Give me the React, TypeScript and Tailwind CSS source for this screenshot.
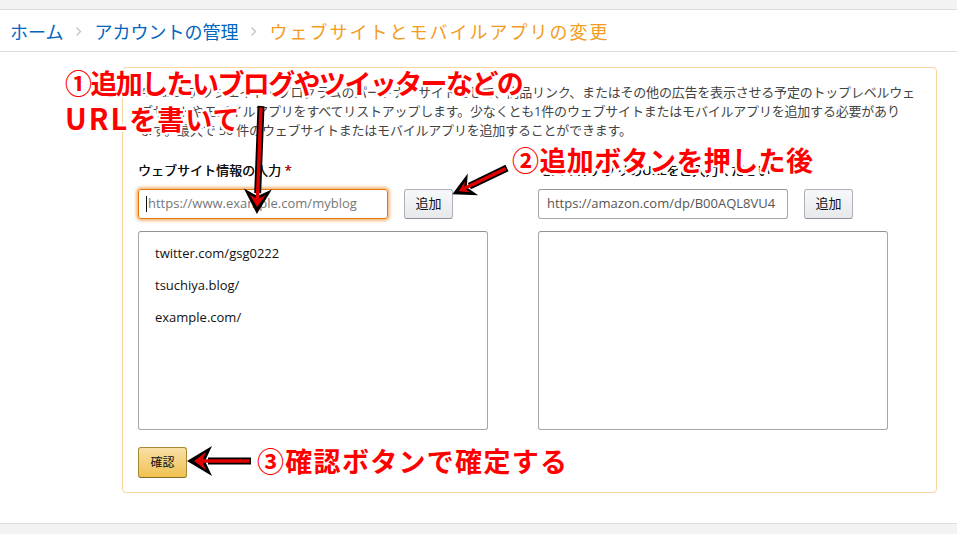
import React from "react";

type ArrowProps = { x1: number; y1: number; x2: number; y2: number; hw?: number; hl?: number };

function Arrow({ x1, y1, x2, y2, hw = 14, hl = 22 }: ArrowProps) {
  const dx = x2 - x1;
  const dy = y2 - y1;
  const L = Math.sqrt(dx * dx + dy * dy);
  const deg = (Math.atan2(dy, dx) * 180) / Math.PI;
  return (
    <g transform={`translate(${x2} ${y2}) rotate(${deg})`}>
      <line x1={-L} y1={0} x2={-hl + 4} y2={0} stroke="#000" strokeWidth={7} />
      <polygon points={`3,0 ${-hl},${-hw} ${-hl + 7},0 ${-hl},${hw}`} fill="#000" />
      <polygon points={`-4,0 ${-hl + 6},${-hw + 6} ${-hl + 10},0 ${-hl + 6},${hw - 6}`} fill="#e00000" />
      <line x1={-L + 1.5} y1={0} x2={-8} y2={0} stroke="#e00000" strokeWidth={3.5} />
    </g>
  );
}

function Chevron() {
  return (
    <svg width="7" height="11" viewBox="0 0 7 11" className="mx-[12px] mt-[2px]">
      <path d="M1.5 1.5 L5.5 5.5 L1.5 9.5" fill="none" stroke="#c4c4c4" strokeWidth="1.4" />
    </svg>
  );
}

const outline =
  "[text-shadow:2px_0_#fff,-2px_0_#fff,0_2px_#fff,0_-2px_#fff,2px_2px_#fff,-2px_-2px_#fff,2px_-2px_#fff,-2px_2px_#fff]";

export default function App() {
  return (
    <div className="relative w-[957px] h-[534px] overflow-hidden bg-white flex flex-col font-['Open_Sans','Noto_Sans_CJK_JP',sans-serif]">
      <div className="h-[10px] bg-[#f3f3f3] border-b border-[#dddddd] shrink-0" />
      <div className="h-[42px] shrink-0 flex items-center pl-[10px] border-b border-[#dddddd] text-[18px] leading-none font-['Noto_Sans_CJK_JP',sans-serif]">
        <span className="text-[#0066c0]">ホーム</span>
        <Chevron />
        <span className="text-[#0066c0]">アカウントの管理</span>
        <Chevron />
        <span className="text-[#f39c1f] tracking-[2px]">ウェブサイトとモバイルアプリの変更</span>
      </div>

      <div className="flex-1 pt-[15px] pl-[122px] pr-[20px]">
        <div className="border border-[#f7d59c] rounded-[4px] px-[15px] pt-[15px] pb-[14px]">
          <p className="pl-[2px] text-[13px] leading-[19px] text-[#444] whitespace-nowrap tracking-[-0.2px]">
            Amazonアソシエイト・プログラムのパートナーサイトとして、商品リンク、またはその他の広告を表示させる予定のトップレベルウェ
            <br />
            ブサイトやモバイルアプリをすべてリストアップします。少なくとも1件のウェブサイトまたはモバイルアプリを追加する必要があり
            <br />
            ます。最大で 50 件のウェブサイトまたはモバイルアプリを追加することができます。
          </p>

          <div className="mt-[21px] grid grid-cols-[400px_1fr]">
            <div>
              <div className="h-[19px] text-[13px] leading-[19px] text-[#111] [text-shadow:0.3px_0_#111]">
                ウェブサイト情報の入力 <span className="text-[#c40000]">*</span>
              </div>
              <div className="mt-[9px] flex gap-[16px]">
                <div className="w-[250px] h-[30px] rounded-[3px] border border-[#e77600] shadow-[0_0_3px_2px_rgba(228,121,17,0.5)] flex items-center pl-[7px] text-[13px] text-[#777]">
                  <span className="w-px h-[16px] bg-[#111] mr-[1px]" />
                  https://www.example.com/myblog
                </div>
                <button className="w-[49px] h-[30px] rounded-[3px] border border-[#adb1b8] border-b-[#8d9096] bg-gradient-to-b from-[#f7f8fa] to-[#e7e9ec] text-[13px] text-[#111]">
                  追加
                </button>
              </div>
              <div className="mt-[12px] w-[350px] h-[199px] rounded-[3px] border border-[#a6a6a6] border-t-[#949494] pl-[16px] pt-[11px] text-[13px] text-[#111]">
                <div className="h-[32px] leading-[20px]">twitter.com/gsg0222</div>
                <div className="h-[32px] leading-[20px]">tsuchiya.blog/</div>
                <div className="h-[32px] leading-[20px]">example.com/</div>
              </div>
            </div>
            <div>
              <div className="h-[19px] text-[13px] leading-[19px] text-[#111] [text-shadow:0.3px_0_#111]">モバイルアプリのURLをご入力ください</div>
              <div className="mt-[9px] flex gap-[16px]">
                <div className="w-[250px] h-[30px] rounded-[3px] border border-[#a6a6a6] border-t-[#949494] flex items-center pl-[8px] text-[13px] text-[#555]">
                  https://amazon.com/dp/B00AQL8VU4
                </div>
                <button className="w-[49px] h-[30px] rounded-[3px] border border-[#adb1b8] border-b-[#8d9096] bg-gradient-to-b from-[#f7f8fa] to-[#e7e9ec] text-[13px] text-[#111]">
                  追加
                </button>
              </div>
              <div className="mt-[12px] w-[350px] h-[199px] rounded-[3px] border border-[#a6a6a6] border-t-[#949494]" />
            </div>
          </div>

          <button className="mt-[17px] w-[49px] h-[31px] rounded-[3px] border border-[#a88734] border-b-[#846a29] bg-gradient-to-b from-[#f7dfa5] to-[#f0c14b] text-[12px] text-[#111]">
            確認
          </button>
        </div>
      </div>

      <div className="h-[11px] shrink-0 bg-[#f3f3f3] border-t border-[#dddddd]" />

      {/* annotations */}
      <div
        className={`absolute left-[65px] top-[66px] text-[27px] leading-[34px] font-bold text-[#ff0000] whitespace-nowrap font-['Noto_Sans_CJK_JP',sans-serif] ${outline}`}
      >
        <div className="tracking-[-1.6px]">①追加したいブログやツイッターなどの</div>
        <div>
          <span className="text-[29px] tracking-[2px]">URL</span>
          <span className="tracking-[1px]">を書いて</span>
        </div>
      </div>
      <div
        className={`absolute left-[512px] top-[143px] text-[27px] leading-[34px] font-bold text-[#ff0000] whitespace-nowrap tracking-[0.4px] font-['Noto_Sans_CJK_JP',sans-serif] ${outline}`}
      >
        ②追加ボタンを押した後
      </div>
      <div
        className={`absolute left-[257px] top-[444px] text-[27px] leading-[34px] font-bold text-[#ff0000] whitespace-nowrap tracking-[1.3px] font-['Noto_Sans_CJK_JP',sans-serif] ${outline}`}
      >
        ③確認ボタンで確定する
      </div>

      <svg className="absolute inset-0 pointer-events-none" width="957" height="534">
        <Arrow x1={261} y1={106} x2={257} y2={211} hw={14} hl={22} />
        <Arrow x1={507} y1={168} x2={455} y2={193} hw={12} hl={20} />
        <Arrow x1={251} y1={461} x2={190} y2={461} hw={15} hl={22} />
      </svg>
    </div>
  );
}
